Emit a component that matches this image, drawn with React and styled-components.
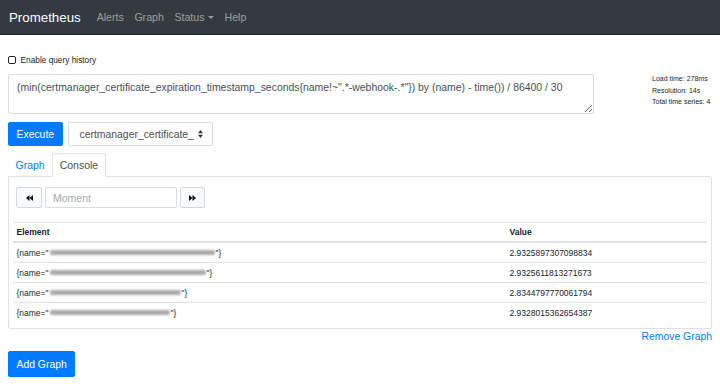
import React from 'react';
import styled, { createGlobalStyle } from 'styled-components';

const GlobalStyle = createGlobalStyle`
  html, body { margin: 0; padding: 0; background: #fff; }
  body {
    font-family: "Liberation Sans", Arial, Helvetica, sans-serif;
    color: #212529;
    font-size: 10.5px;
  }
  * { box-sizing: border-box; }
`;

const Navbar = styled.nav`
  display: flex;
  align-items: center;
  height: 35px;
  padding: 0 8px 0 9px;
  background: #343a40;
  border-bottom: 1px solid #1e2124;
`;

const Brand = styled.span`
  font-size: 13.3px;
  color: #fff;
  margin-right: 10.7px;
`;

const NavLink = styled.span`
  display: flex;
  align-items: center;
  font-size: 10.6px;
  color: rgba(255, 255, 255, 0.5);
  padding: 0 5.3px;
`;

const Caret = styled.span`
  display: inline-block;
  margin-left: 3.5px;
  border-top: 3.2px solid rgba(255, 255, 255, 0.5);
  border-left: 3.2px solid transparent;
  border-right: 3.2px solid transparent;
`;

const Main = styled.main`
  padding: 0 8px;
`;

const CheckRow = styled.label`
  display: flex;
  align-items: center;
  height: 10px;
  margin-top: 20px;
  font-size: 8.3px;
`;

const Check = styled.input`
  appearance: none;
  margin: 0 5px 0 0;
  width: 7.5px;
  height: 7.5px;
  border: 1.4px solid #222;
  border-radius: 2px;
  background: #fff;
`;

const QueryRow = styled.div`
  display: flex;
  align-items: flex-start;
  margin-top: 9px;
`;

const QueryArea = styled.textarea`
  width: 586px;
  height: 40px;
  padding: 5px 8px;
  border: 1px solid #d9dde1;
  border-radius: 2px;
  font-family: "Liberation Sans", Arial, sans-serif;
  font-size: 10.45px;
  line-height: 15px;
  color: #495057;
  resize: vertical;
  outline: none;
`;

const Stats = styled.div`
  margin-left: 58px;
  margin-top: -1px;
  font-size: 7px;
  line-height: 11.5px;
  color: #212529;
`;

const ControlRow = styled.div`
  display: flex;
  align-items: center;
  gap: 5px;
  margin-top: 8px;
`;

const PrimaryButton = styled.button`
  height: ${p => p.$h || 24}px;
  padding: 0 7.5px;
  border: 1px solid #007bff;
  border-radius: 2px;
  background: #007bff;
  color: #fff;
  font-family: "Liberation Sans", Arial, sans-serif;
  font-size: 10.4px;
`;

const SelectBox = styled.div`
  display: flex;
  align-items: center;
  justify-content: space-between;
  width: 145px;
  height: 24px;
  padding: 0 9px 0 11px;
  border: 1px solid #d9dde1;
  border-radius: 2px;
  color: #495057;
  font-size: 10.4px;
`;

const TabList = styled.div`
  display: flex;
  margin-top: 7px;
`;

const Tab = styled.div`
  display: flex;
  align-items: center;
  height: 24px;
  padding: 0 6.5px;
  margin-bottom: -1px;
  border: 1px solid ${p => (p.$active ? '#dee2e6' : 'transparent')};
  border-bottom-color: ${p => (p.$active ? '#fff' : 'transparent')};
  border-radius: 2px 2px 0 0;
  background: ${p => (p.$active ? '#fff' : 'transparent')};
  color: ${p => (p.$active ? '#495057' : '#007bff')};
  font-size: 10.5px;
`;

const Panel = styled.section`
  border: 1px solid #dee2e6;
  border-radius: 0 2px 2px 2px;
  padding: 10px 4px 6px 4px;
`;

const MomentRow = styled.div`
  display: flex;
  gap: 3px;
  padding-left: 3px;
  height: 21px;
`;

const StepButton = styled.button`
  display: flex;
  align-items: center;
  justify-content: center;
  width: ${p => p.$w}px;
  height: 21px;
  padding: 0;
  border: 1px solid #d6d9dc;
  border-radius: 2px;
  background: #f8f9fa;
`;

const MomentInput = styled.input`
  width: 132px;
  height: 21px;
  padding: 0 7px;
  border: 1px solid #d9dde1;
  border-radius: 2px;
  font-family: "Liberation Sans", Arial, sans-serif;
  font-size: 10.5px;
  color: #495057;
  outline: none;
  &::placeholder { color: #a3a8ad; }
`;

const Table = styled.div`
  margin-top: 14px;
  font-size: 8.5px;
`;

const Row = styled.div`
  display: grid;
  grid-template-columns: 493px 1fr;
  align-items: center;
  height: ${p => (p.$first ? 19 : 20)}px;
  border-top: ${p => (p.$first ? 'none' : '1px solid #dee2e6')};
`;

const HeadRow = styled(Row)`
  height: 21px;
  border-top: 1px solid #dee2e6;
  border-bottom: 2px solid #dee2e6;
  font-weight: bold;
`;

const Cell = styled.div`
  display: flex;
  align-items: center;
  padding: 0 3.5px;
  white-space: nowrap;
  color: #212529;
`;

const Blur = styled.span`
  display: inline-block;
  height: 4.5px;
  margin: 0 1px;
  border-radius: 2px;
  background: #a9a9a9;
  filter: blur(0.8px);
`;

const RemoveRow = styled.div`
  display: flex;
  justify-content: flex-end;
  margin-top: 2px;
  line-height: 12px;
`;

const LinkText = styled.span`
  color: #007bff;
  font-size: 10.4px;
`;

const AddRow = styled.div`
  margin-top: 8px;
`;

const BackIcon = () => (
  <svg width="7" height="6" viewBox="0 0 7 6">
    <polygon points="3.5,0 3.5,6 0,3" fill="#111" />
    <polygon points="7,0 7,6 3.5,3" fill="#111" />
  </svg>
);

const FwdIcon = () => (
  <svg width="7" height="6" viewBox="0 0 7 6">
    <polygon points="0,0 0,6 3.5,3" fill="#111" />
    <polygon points="3.5,0 3.5,6 7,3" fill="#111" />
  </svg>
);

const SelectArrows = () => (
  <svg width="5" height="8" viewBox="0 0 5 8">
    <polygon points="0,3.2 5,3.2 2.5,0" fill="#333" />
    <polygon points="0,4.8 5,4.8 2.5,8" fill="#333" />
  </svg>
);

const rows = [
  { w: 165, v: '2.9325897307098834' },
  { w: 156, v: '2.9325611813271673' },
  { w: 131, v: '2.8344797770061794' },
  { w: 120, v: '2.9328015362654387' },
];

export default function App() {
  return (
    <>
      <GlobalStyle />
      <Navbar>
        <Brand>Prometheus</Brand>
        <NavLink>Alerts</NavLink>
        <NavLink>Graph</NavLink>
        <NavLink>
          Status<Caret />
        </NavLink>
        <NavLink>Help</NavLink>
      </Navbar>
      <Main>
        <CheckRow>
          <Check type="checkbox" />
          Enable query history
        </CheckRow>
        <QueryRow>
          <QueryArea
            readOnly
            value={'(min(certmanager_certificate_expiration_timestamp_seconds{name!~".*-webhook-.*"}) by (name) - time()) / 86400 / 30'}
          />
          <Stats>
            <div>Load time: 278ms</div>
            <div>Resolution: 14s</div>
            <div>Total time series: 4</div>
          </Stats>
        </QueryRow>
        <ControlRow>
          <PrimaryButton>Execute</PrimaryButton>
          <SelectBox>
            <span>certmanager_certificate_</span>
            <SelectArrows />
          </SelectBox>
        </ControlRow>
        <TabList>
          <Tab>Graph</Tab>
          <Tab $active>Console</Tab>
        </TabList>
        <Panel>
          <MomentRow>
            <StepButton $w={26}>
              <BackIcon />
            </StepButton>
            <MomentInput placeholder="Moment" />
            <StepButton $w={25}>
              <FwdIcon />
            </StepButton>
          </MomentRow>
          <Table>
            <HeadRow>
              <Cell>Element</Cell>
              <Cell>Value</Cell>
            </HeadRow>
            {rows.map((r, i) => (
              <Row key={i} $first={i === 0}>
                <Cell>
                  {'{name="'}
                  <Blur style={{ width: r.w }} />
                  {'"}'}
                </Cell>
                <Cell>{r.v}</Cell>
              </Row>
            ))}
          </Table>
        </Panel>
        <RemoveRow>
          <LinkText>Remove Graph</LinkText>
        </RemoveRow>
        <AddRow>
          <PrimaryButton $h={26}>Add Graph</PrimaryButton>
        </AddRow>
      </Main>
    </>
  );
}
